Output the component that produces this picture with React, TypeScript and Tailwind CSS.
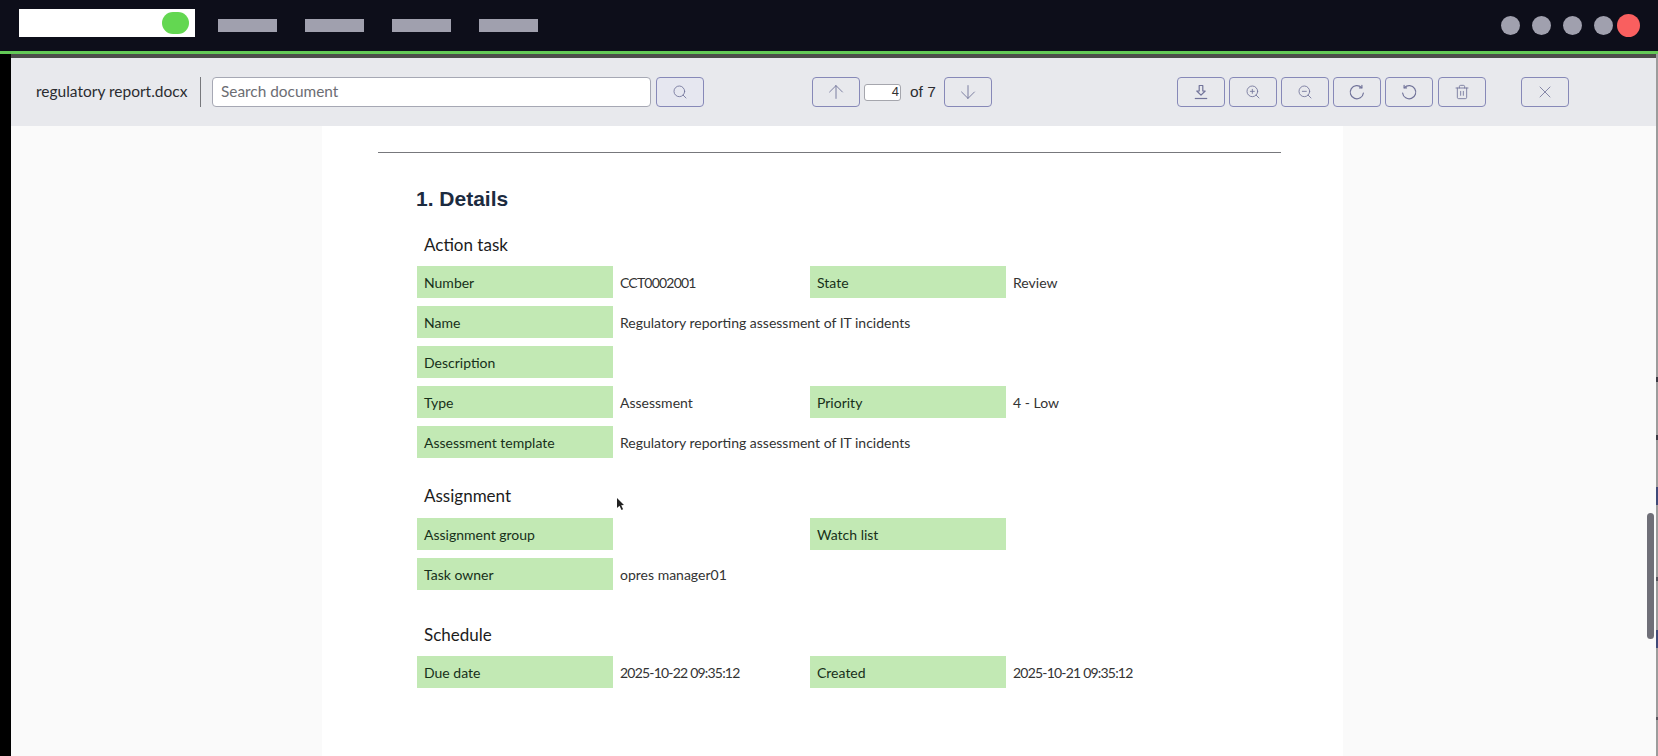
import { ArrowDown, ArrowUp, Search, Trash2, X, ZoomIn, ZoomOut } from 'lucide-react';
import type { ReactNode } from 'react';

const navItems = [1, 2, 3, 4];
const windowDots = [1, 2, 3, 4];

function ToolButton({ children, className = '' }: { children: ReactNode; className?: string }) {
  return (
    <button className={`flex h-[30px] w-[48px] shrink-0 items-center justify-center rounded-[4px] border border-[#8789b8] text-[#72749a] ${className}`}>
      {children}
    </button>
  );
}

function DownloadIcon() {
  return (
    <svg width="18" height="18" viewBox="0 0 18 18" fill="none" stroke="currentColor" strokeWidth="1.2">
      <path d="M7.2 2.5h3.6v5.5h2.4L9 12.2 4.8 8h2.4z" strokeLinejoin="round" />
      <path d="M2.8 15.5h12.4" />
    </svg>
  );
}

// the capture shows an open ring with a very small head, lucide's corner arrow is too heavy
function RotateIcon({ flip = false }: { flip?: boolean }) {
  return (
    <svg className={flip ? '-scale-x-100' : ''} width="18" height="18" viewBox="0 0 18 18" fill="none" stroke="currentColor" strokeWidth="1.2" strokeLinecap="round">
      <path d="M13.6 4.6A6.6 6.6 0 1 0 15.4 10" />
      <path d="M13.9 2.4v2.5h-2.4" />
    </svg>
  );
}

function FieldLabel({ children }: { children: ReactNode }) {
  return (
    <div className="flex h-[32px] w-[196px] shrink-0 items-center bg-[#c2e9b4] pl-[7px] text-[14px] text-[#17301a]">
      {children}
    </div>
  );
}

type RowProps = {
  label: string;
  value?: string;
  label2?: string;
  value2?: string;
  narrow?: boolean;
  narrow2?: boolean;
};

// Lato digits run wider than the report's font, narrow pulls them back
function Row({ label, value, label2, value2, narrow = false, narrow2 = false }: RowProps) {
  return (
    <div className="mb-[8px] flex items-center">
      <FieldLabel>{label}</FieldLabel>
      <div className={`w-[197px] shrink-0 whitespace-nowrap pl-[7px] text-[14px] text-[#333] ${narrow ? 'tracking-[-0.8px]' : ''}`}>{value}</div>
      {label2 && <FieldLabel>{label2}</FieldLabel>}
      {value2 && <div className={`whitespace-nowrap pl-[7px] text-[14px] text-[#333] ${narrow2 ? 'tracking-[-0.8px]' : ''}`}>{value2}</div>}
    </div>
  );
}

function SubHeading({ children, className = '' }: { children: ReactNode; className?: string }) {
  return <div className={`pl-[7px] text-[17px] leading-[22px] text-[#1c1c1c] ${className}`}>{children}</div>;
}

export default function App() {
  return (
    <div className="flex h-[756px] flex-col overflow-hidden bg-black font-['Lato',sans-serif]">
      {/* top bar, names are masked in the capture */}
      <header className="flex h-[51px] shrink-0 items-start bg-[#0d0e1a]">
        <div className="ml-[19px] mt-[9px] flex h-[28px] w-[176px] items-center justify-end bg-white pr-[6px]">
          <div className="h-[22px] w-[27px] rounded-full bg-[#63d751]" />
        </div>
        <nav className="ml-[23px] mt-[19px] flex gap-[28px]">
          {navItems.map(n => (
            <div key={n} className="h-[13px] w-[59px] bg-[#a0a0ae]" />
          ))}
        </nav>
        <div className="ml-auto mr-[18px] mt-[14px] flex h-[23px] items-center gap-[4px]">
          <div className="flex gap-[12px]">
            {windowDots.map(n => (
              <div key={n} className="h-[19px] w-[19px] rounded-full bg-[#a0a0ae]" />
            ))}
          </div>
          <div className="h-[23px] w-[23px] rounded-full bg-[#f95f5f]" />
        </div>
      </header>
      <div className="h-[3px] shrink-0 bg-[#63c956]" />

      <div className="flex min-h-0 flex-1">
        <div className="w-[11px] shrink-0 bg-black" />
        <main className="flex min-w-0 flex-1 flex-col">
          <div className="h-[4px] shrink-0 bg-[#4c4d4a]" />
          <div className="flex h-[68px] shrink-0 items-center bg-[#e8e9ed]">
            <span className="ml-[25px] w-[151px] whitespace-nowrap text-[15.5px] text-[#2b2c30]">regulatory report.docx</span>
            <div className="ml-[13px] h-[30px] w-[1px] bg-[#77787c]" />
            <div className="ml-[11px] flex h-[30px] w-[439px] items-center rounded-[4px] border border-[#a6a8b4] bg-white pl-[8px] text-[15.4px] text-[#6c6d73]">
              Search document
            </div>
            <ToolButton className="ml-[5px] w-[47px] bg-[#e6e7f0]">
              <Search size={16} strokeWidth={1.3} />
            </ToolButton>

            <ToolButton className="ml-[108px]">
              <ArrowUp size={22} strokeWidth={1} />
            </ToolButton>
            <div className="ml-[4px] flex h-[17px] w-[37px] items-center justify-end rounded-[3px] border border-[#a5a6ad] bg-white pr-[1px] font-['Liberation_Sans',sans-serif] text-[13px] text-[#333]">
              4
            </div>
            <span className="ml-[9px] w-[34px] whitespace-nowrap font-['Liberation_Sans',sans-serif] text-[15.5px] text-[#2b2c30]">of 7</span>
            <ToolButton>
              <ArrowDown size={22} strokeWidth={1} />
            </ToolButton>

            <ToolButton className="ml-[185px]">
              <DownloadIcon />
            </ToolButton>
            <ToolButton className="ml-[4px]">
              <ZoomIn size={16} strokeWidth={1.3} />
            </ToolButton>
            <ToolButton className="ml-[4px]">
              <ZoomOut size={16} strokeWidth={1.3} />
            </ToolButton>
            <ToolButton className="ml-[4px]">
              <RotateIcon />
            </ToolButton>
            <ToolButton className="ml-[4px]">
              <RotateIcon flip />
            </ToolButton>
            <ToolButton className="ml-[5px]">
              <Trash2 size={16} strokeWidth={1.3} />
            </ToolButton>
            <ToolButton className="ml-[35px]">
              <X size={20} strokeWidth={1} />
            </ToolButton>
          </div>

          <div className="relative min-h-0 flex-1 bg-[#fafafa]">
            <div className="ml-[311px] h-full w-[1021px] bg-white pl-[56px] pt-[26px]">
              <div className="h-[1px] w-[903px] bg-[#77787c]" />
              <div className="pl-[39px]">
                <h1 className="-ml-[1px] mt-[33px] font-['Liberation_Sans',sans-serif] text-[21px] font-bold leading-[26px] text-[#1c2b3f]">1. Details</h1>
                <SubHeading className="mt-[22px] mb-[10px]">Action task</SubHeading>
                <Row label="Number" value="CCT0002001" label2="State" value2="Review" narrow />
                <Row label="Name" value="Regulatory reporting assessment of IT incidents" />
                <Row label="Description" />
                <Row label="Type" value="Assessment" label2="Priority" value2="4 - Low" />
                <Row label="Assessment template" value="Regulatory reporting assessment of IT incidents" />
                <SubHeading className="mt-[27px] mb-[11px]">Assignment</SubHeading>
                <Row label="Assignment group" label2="Watch list" />
                <Row label="Task owner" value="opres manager01" />
                <SubHeading className="mt-[34px] mb-[10px]">Schedule</SubHeading>
                <Row label="Due date" value="2025-10-22 09:35:12" label2="Created" value2="2025-10-21 09:35:12" narrow narrow2 />
              </div>
            </div>
            {/* mouse pointer in the capture */}
            <svg className="absolute left-[605px] top-[371px]" width="9" height="14" viewBox="0 0 9 14" fill="#222">
              <path d="M1 1v10l2.5-2.2L5.5 13l1.6-.8L5.2 8.3 8 8z" />
            </svg>
            <div className="absolute right-[2px] top-[387px] h-[126px] w-[7px] rounded-full bg-[#6f6f78]" />
          </div>
        </main>
        {/* window edge, with bits of whatever sits behind it */}
        <div className="relative w-[2px] shrink-0 bg-[#9c9c9c]">
          <div className="absolute left-0 top-[323px] h-[5px] w-[2px] bg-[#3a3a44]" />
          <div className="absolute left-0 top-[381px] h-[5px] w-[2px] bg-[#3a3a44]" />
          <div className="absolute left-0 top-[433px] h-[18px] w-[2px] bg-[#3f4a78]" />
          <div className="absolute left-0 top-[523px] h-[4px] w-[2px] bg-[#55555e]" />
          <div className="absolute left-0 top-[576px] h-[18px] w-[2px] bg-[#3f4a78]" />
          <div className="absolute left-0 top-[663px] h-[3px] w-[2px] bg-[#55555e]" />
        </div>
      </div>
    </div>
  );
}
